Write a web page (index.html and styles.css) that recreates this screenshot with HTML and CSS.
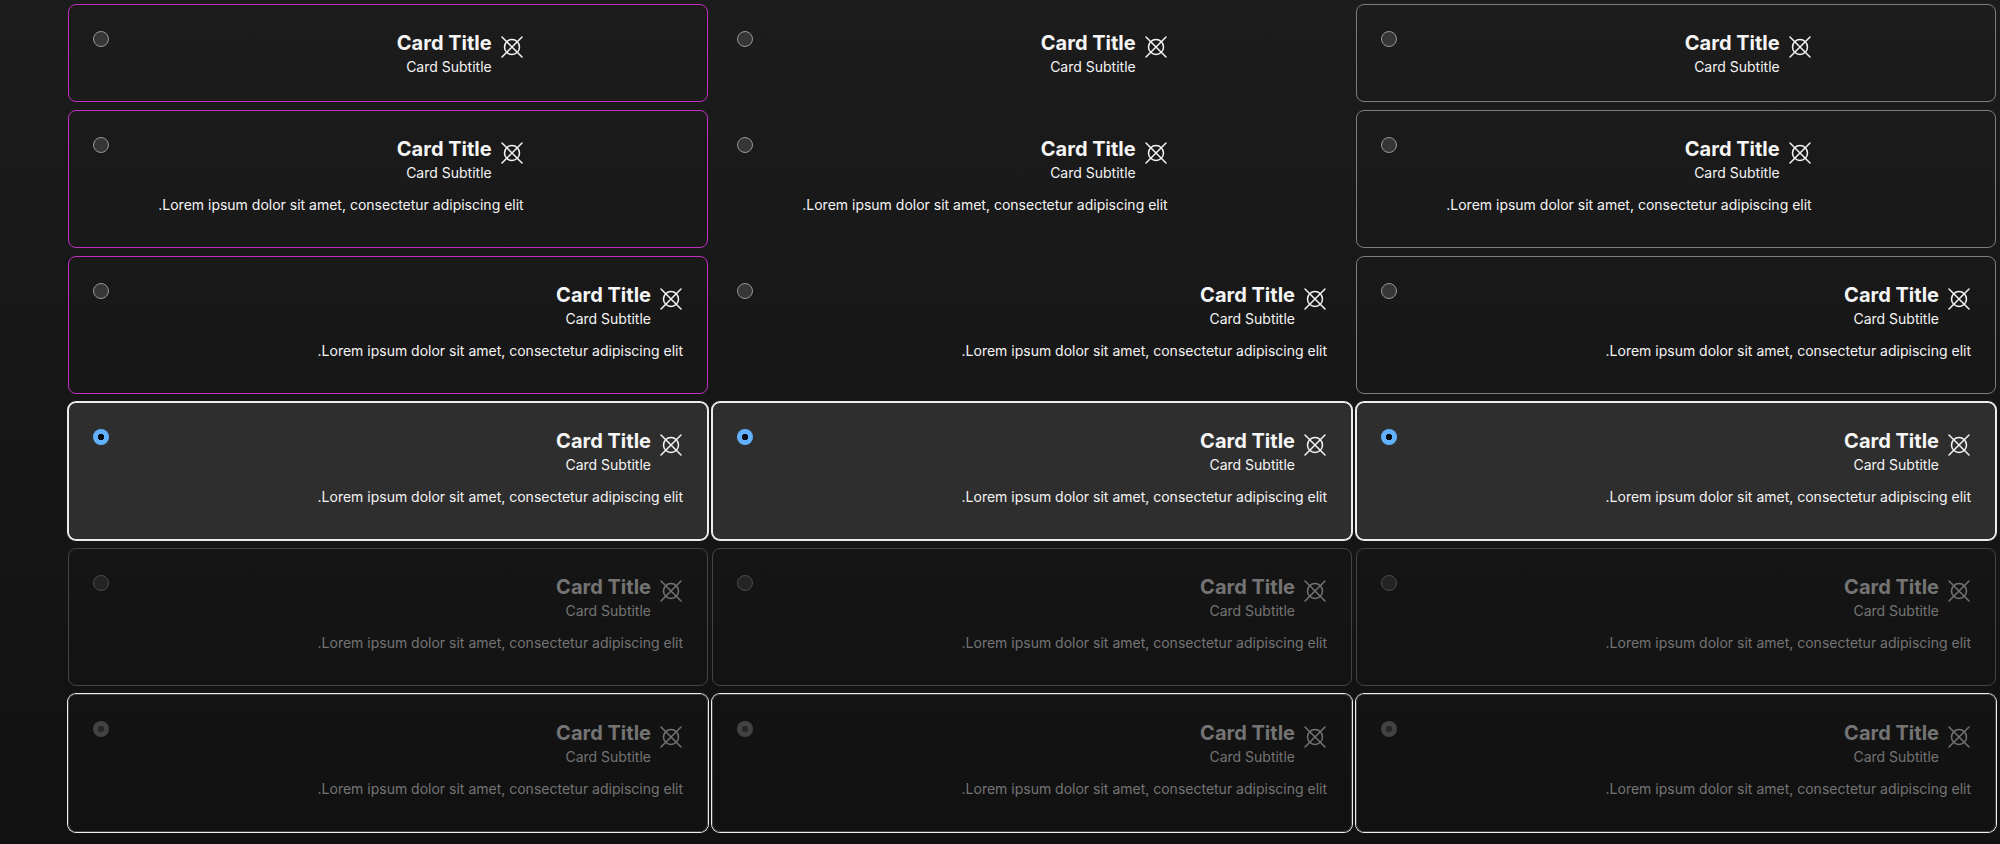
FILE: index.html
```
<!DOCTYPE html>
<html lang="en">
<head>
<meta charset="utf-8">
<title>Card radio buttons</title>
<link rel="stylesheet" href="styles.css">
</head>
<body>
<main class="grid"></main>
<script src="cards.js"></script>
</body>
</html>
```

FILE: styles.css
```
* { box-sizing: border-box; }

html { min-height: 100%; background: #111; }

body {
  margin: 0;
  min-height: 100vh;
  background: linear-gradient(#1c1c1c, #111);
  color: #f5f5f5;
  font: 14px/20px Inter, "Liberation Sans", sans-serif;
}

.grid {
  display: grid;
  grid-template-columns: repeat(3, minmax(0, 1fr));
  gap: 8px 4px;
  padding: 4px 4px 12px 68px;
}

.card {
  display: flex;
  align-items: flex-start;
  padding: 23px 24px;
  border: 1px solid #7d7d7d;
  border-radius: 8px;
  cursor: pointer;
}

.card--accent { border-color: #c22dc4; }
.card--plain { border-color: transparent; }

.card--selected {
  background: #2e2e2e;
  border-color: #ededed;
  box-shadow: 0 0 0 1px #ededed;
}

.card--disabled {
  border-color: #434343;
  color: #747474;
  cursor: default;
}

.card--disabled.card--selected { background: none; }

.card__radio {
  appearance: none;
  flex: none;
  width: 16px;
  height: 16px;
  margin: 3px 0;
  border: 1px solid #979797;
  border-radius: 50%;
  background: #363636;
}

.card__radio:checked {
  border: 0;
  background: radial-gradient(circle, #070b10 0 3px, #62b1ff 3px);
}

.card__radio:disabled {
  border-color: #4b4b4b;
  background: #242424;
}

.card__radio:checked:disabled {
  background: radial-gradient(circle, #272727 0 3px, #424242 3px);
}

.card__content {
  flex: 1;
  display: flex;
  flex-direction: column;
  gap: 11px;
}

.card--centered .card__content { padding-inline-start: 27%; }

.card__header { display: flex; gap: 8px; padding: 1px 0; }

.card__icon { flex: none; width: 24px; height: 24px; margin-top: 6px; }

.card__title { display: block; font-size: 20px; line-height: 28px; font-weight: 700; }

.card__subtitle { display: block; }

.card__text { margin-bottom: 9px; }
```

FILE: cards.js
```
const rows = [
  { centered: true, text: false },
  { centered: true, text: true },
  { text: true },
  { text: true, selected: true },
  { text: true, disabled: true },
  { text: true, selected: true, disabled: true },
];
const variants = ["accent", "plain", "outline"];

const icon = `<svg class="card__icon" viewBox="0 0 24 24" fill="none" stroke="currentColor" stroke-width="1.5" stroke-linecap="round" aria-hidden="true">
  <circle cx="12" cy="12" r="7.5"/><path d="M2 2l20 20M22 2L2 22"/></svg>`;

const card = (row, variant, name) => {
  const classes = ["card", `card--${variant}`];
  if (row.centered) classes.push("card--centered");
  if (row.selected) classes.push("card--selected");
  if (row.disabled) classes.push("card--disabled");
  return `<label class="${classes.join(" ")}">
    <input class="card__radio" type="radio" name="${name}" ${row.selected ? "checked" : ""} ${row.disabled ? "disabled" : ""}>
    <span class="card__content" dir="rtl">
      <span class="card__header">${icon}
        <span><span class="card__title">Card Title</span><span class="card__subtitle">Card Subtitle</span></span>
      </span>
      ${row.text ? '<span class="card__text">Lorem ipsum dolor sit amet, consectetur adipiscing elit.</span>' : ""}
    </span>
  </label>`;
};

document.querySelector(".grid").innerHTML = rows
  .map((row, r) => variants.map((v) => card(row, v, `choice-${r}-${v}`)).join(""))
  .join("");
```
